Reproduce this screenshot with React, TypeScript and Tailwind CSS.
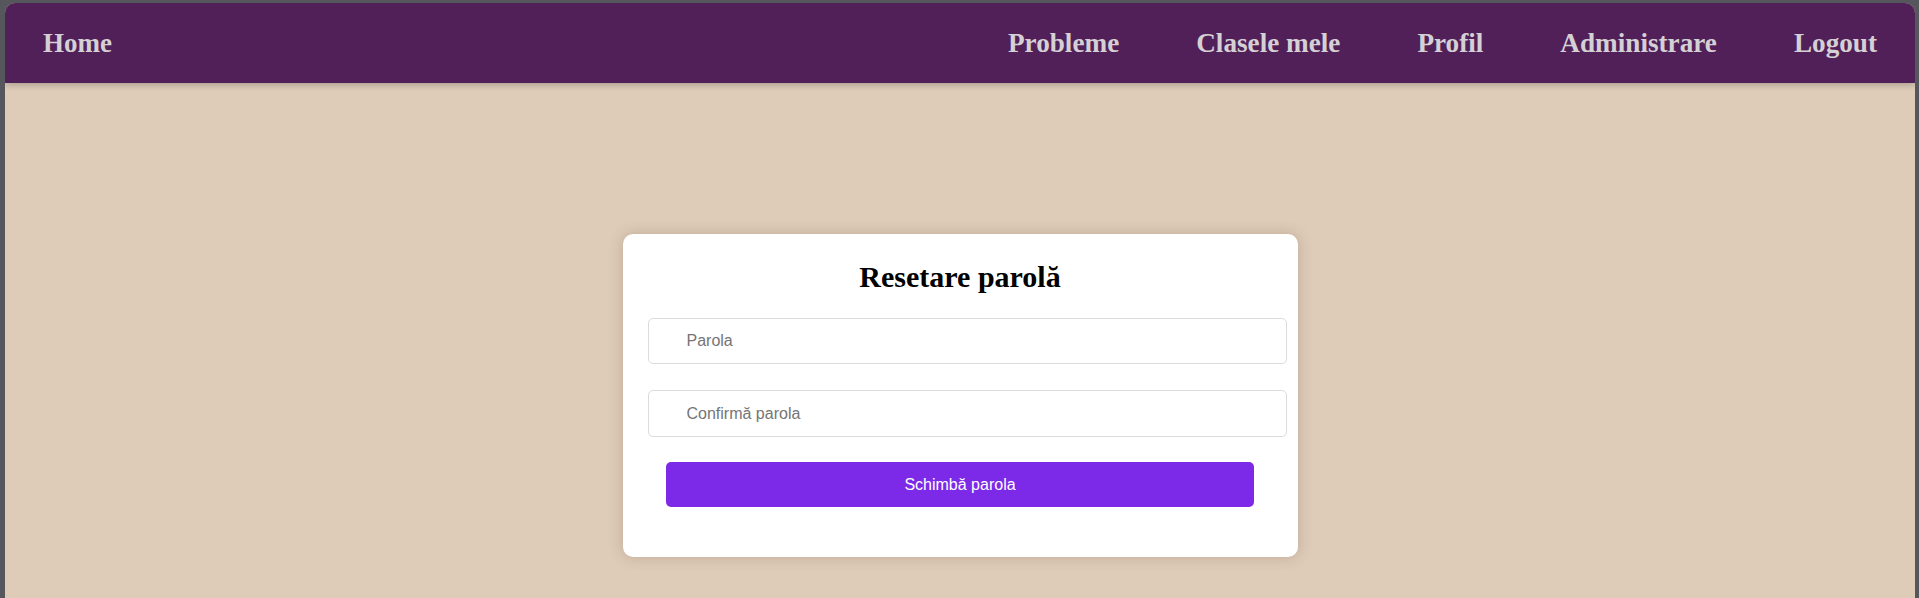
import React from "react";

export default function App() {
  const links = ["Probleme", "Clasele mele", "Profil", "Administrare", "Logout"];
  return (
    <div className="h-screen w-full overflow-hidden bg-[#55575c] pt-[3px] pl-[5px] pr-[4px]">
      <div className="flex h-full flex-col overflow-hidden rounded-t-[10px] bg-[#decbb8]">
        <nav
          className="relative z-10 flex h-[80px] shrink-0 items-center justify-between bg-[#522059] px-[38px] shadow-[0_2px_6px_rgba(0,0,0,0.22)]"
          style={{ fontFamily: '"Liberation Serif", "Times New Roman", serif' }}
        >
          <a className="text-[27px] font-bold text-[#d4d0d4]">Home</a>
          <div className="flex items-center gap-[77px]">
            {links.map((l) => (
              <a key={l} className="text-[27.2px] font-bold text-[#d4d0d4]">
                {l}
              </a>
            ))}
          </div>
        </nav>
        <main className="flex flex-1 justify-center pt-[151px]">
          <div className="h-[323px] w-[675px] rounded-[10px] bg-white pt-[26px] shadow-[0_0_14px_rgba(120,90,60,0.28)]">
            <h2
              className="text-center text-[30px] font-bold leading-[33px] text-black"
              style={{ fontFamily: '"Liberation Serif", "Times New Roman", serif' }}
            >
              Resetare parolă
            </h2>
            <div
              className="mt-[25px] flex flex-col gap-[26px] pl-[25px]"
              style={{ fontFamily: '"Liberation Sans", Arial, sans-serif' }}
            >
              <input
                type="password"
                placeholder="Parola"
                className="h-[46px] w-[639px] rounded-[5px] border border-[#dcdcdc] bg-white pl-[38px] text-[16px] text-black outline-none placeholder:text-[#757575]"
              />
              <input
                type="password"
                placeholder="Confirmă parola"
                className="h-[47px] w-[639px] rounded-[5px] border border-[#dcdcdc] bg-white pl-[38px] text-[16px] text-black outline-none placeholder:text-[#757575]"
              />
            </div>
            <div className="mt-[25px] flex justify-center">
              <button
                className="h-[45px] w-[588px] rounded-[5px] bg-[#7d2ae8] text-[16px] text-white"
                style={{ fontFamily: '"Liberation Sans", Arial, sans-serif' }}
              >
                Schimbă parola
              </button>
            </div>
          </div>
        </main>
      </div>
    </div>
  );
}
